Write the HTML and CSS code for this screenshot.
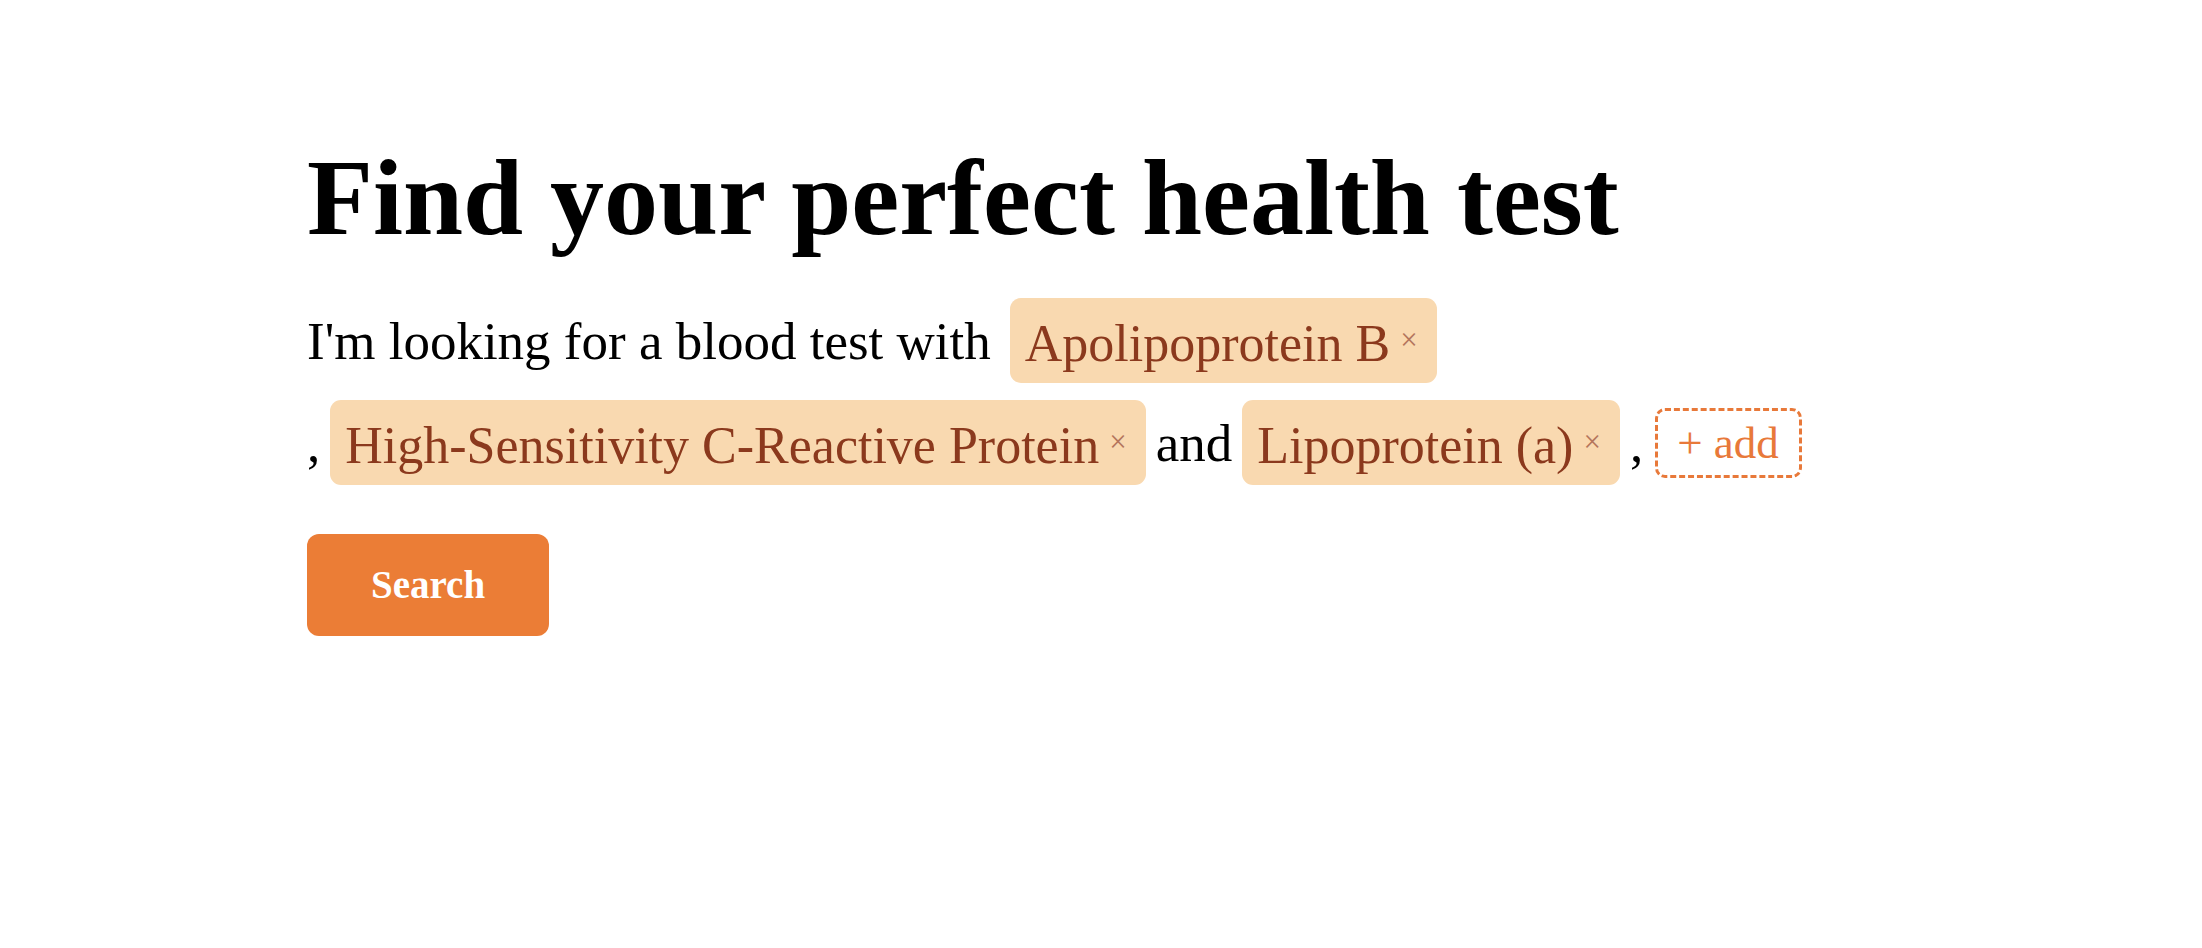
FILE: index.html
```html
<!DOCTYPE html>
<html lang="en">
<head>
<meta charset="utf-8">
<title>Find your perfect health test</title>
<link rel="stylesheet" href="styles.css">
</head>
<body>
<main class="page">
  <h1 class="title">Find your perfect health test</h1>
  <div class="query">
    <span class="word lead">I'm looking for a blood test with</span>
    <span class="chip"><span class="chip-label">Apolipoprotein B</span><span class="chip-x">×</span></span>
    <span class="group">
      <span class="word">,</span>
      <span class="chip"><span class="chip-label">High-Sensitivity C-Reactive Protein</span><span class="chip-x">×</span></span>
    </span>
    <span class="group">
      <span class="word">and</span>
      <span class="chip"><span class="chip-label">Lipoprotein (a)</span><span class="chip-x">×</span></span>
    </span>
    <span class="group">
      <span class="word">,</span>
      <button class="add" type="button">+ add</button>
    </span>
  </div>
  <button class="search" type="button">Search</button>
</main>
</body>
</html>
```

FILE: styles.css
```css
html, body {
  margin: 0;
  padding: 0;
  background: #ffffff;
}

body {
  font-family: "Liberation Serif", "Times New Roman", serif;
  color: #000000;
}

.page {
  width: 1588px;
  margin: 0 auto;
  padding-top: 134px;
}

.title {
  margin: 0;
  font-size: 108px;
  line-height: 128px;
  font-weight: 700;
}

.query {
  margin-top: 36px;
  display: flex;
  flex-wrap: wrap;
  align-items: center;
  column-gap: 10px;
  row-gap: 17px;
  font-size: 53px;
  line-height: 60px;
}

.group {
  display: flex;
  align-items: center;
  gap: 10px;
}

.word {
  display: block;
}

.lead {
  margin-right: 9px;
}

.chip {
  display: inline-flex;
  align-items: center;
  background: #f9d9b0;
  color: #8b391d;
  border-radius: 11px;
  font-size: 52px;
  padding: 16px 19px 9px 15px;
}

.chip-label {
  display: block;
}

.chip-x {
  display: block;
  font-size: 31px;
  line-height: 28px;
  color: #b4755c;
  margin-left: 10px;
  margin-bottom: 8px;
}

.add {
  font-family: "Liberation Serif", "Times New Roman", serif;
  font-size: 45px;
  line-height: 50px;
  color: #e8793a;
  background: transparent;
  border: 3px dashed #e8793a;
  border-radius: 10px;
  padding: 7px 20px 7px 19px;
  margin-left: 2px;
  cursor: pointer;
}

.search {
  display: block;
  margin-top: 49px;
  font-family: "Liberation Serif", "Times New Roman", serif;
  font-size: 39px;
  line-height: 44px;
  font-weight: 700;
  color: #ffffff;
  background: #eb7d36;
  border: none;
  border-radius: 12px;
  padding: 29px 64px;
  cursor: pointer;
}
```
